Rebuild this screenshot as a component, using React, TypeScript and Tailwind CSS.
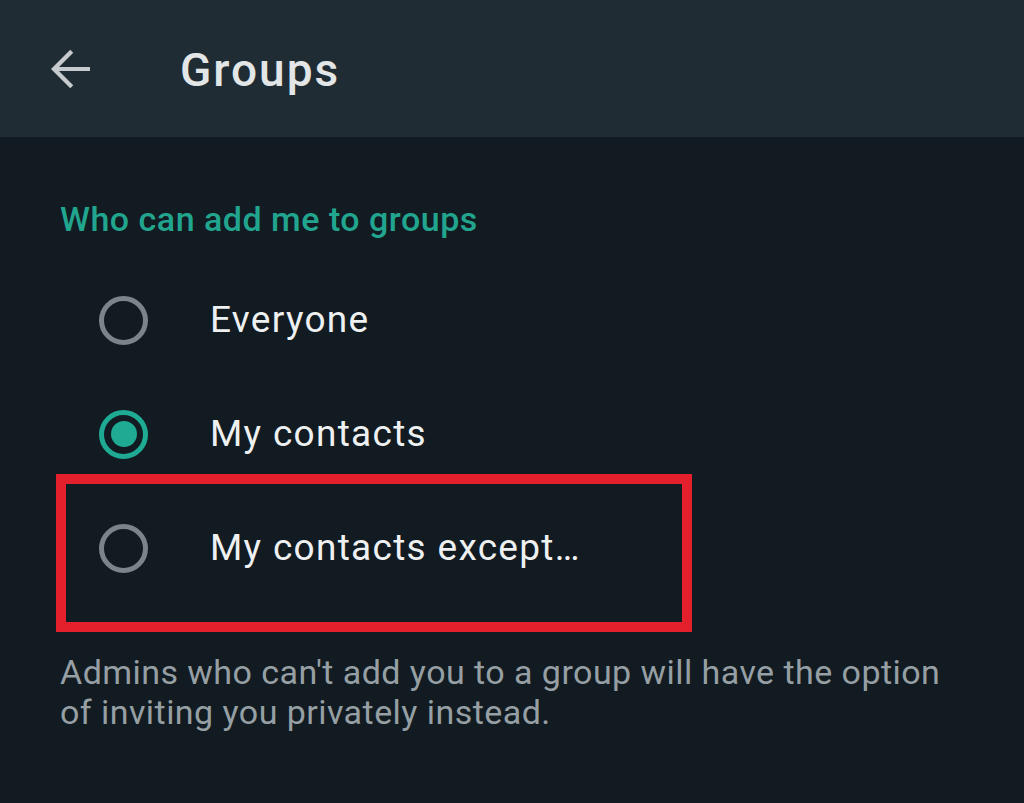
const font = { fontFamily: "Roboto, 'Noto Sans', sans-serif" };

interface RadioRowProps {
  label: string;
  checked?: boolean;
}

function RadioRow({ label, checked }: RadioRowProps) {
  return (
    <div className="flex h-[114px] items-center">
      <div className="ml-[39px] flex h-[49px] w-[49px] shrink-0 items-center justify-center">
        {checked ? (
          <div className="flex h-[49px] w-[49px] items-center justify-center rounded-full border-[5px] border-[#1faa93]">
            <div className="h-[26px] w-[26px] rounded-full bg-[#1faa93]" />
          </div>
        ) : (
          <div className="h-[49px] w-[49px] rounded-full border-[5px] border-[#7b8488]" />
        )}
      </div>
      <span className="ml-[62px] text-[37px] tracking-[1.3px] text-[#eef0f1]">
        {label}
      </span>
    </div>
  );
}

export default function App() {
  return (
    <div className="min-h-[803px] w-[1024px] bg-[#111b21]" style={font}>
      {/* Header */}
      <div className="flex h-[137px] items-center bg-[#202c33]">
        <svg
          className="ml-[50px] h-[40px] w-[40px]"
          viewBox="4 4 16 16"
          fill="#c7cbcd"
        >
          <path d="M20 11.2H7.6l5.7-5.7L12.1 4.3 4.4 12l7.7 7.7 1.2-1.2-5.7-5.7H20z" />
        </svg>
        <h1 className="ml-[90px] pt-[3px] text-[46px] font-medium tracking-[2px] text-[#e3e6e7]">
          Groups
        </h1>
      </div>

      {/* Body */}
      <div className="pl-[60px]">
        <h2 className="mt-[62px] h-[40px] text-[34px] font-medium leading-[40px] tracking-[0.5px] text-[#22a58f]">
          Who can add me to groups
        </h2>

        <div className="mt-[24px] flex flex-col">
          <RadioRow label="Everyone" />
          <RadioRow label="My contacts" checked />
          <div className="relative">
            <RadioRow label="My contacts except…" />
            <span className="pointer-events-none absolute left-[-4px] top-[-17px] h-[158px] w-[636px] border-[10px] border-[#e3202b]" />
          </div>
        </div>

        <p className="mt-[47px] w-[905px] text-[34px] leading-[40px] tracking-[0.45px] text-[#969fa4]">
          Admins who can't add you to a group will have the option of inviting
          you privately instead.
        </p>
      </div>
    </div>
  );
}
